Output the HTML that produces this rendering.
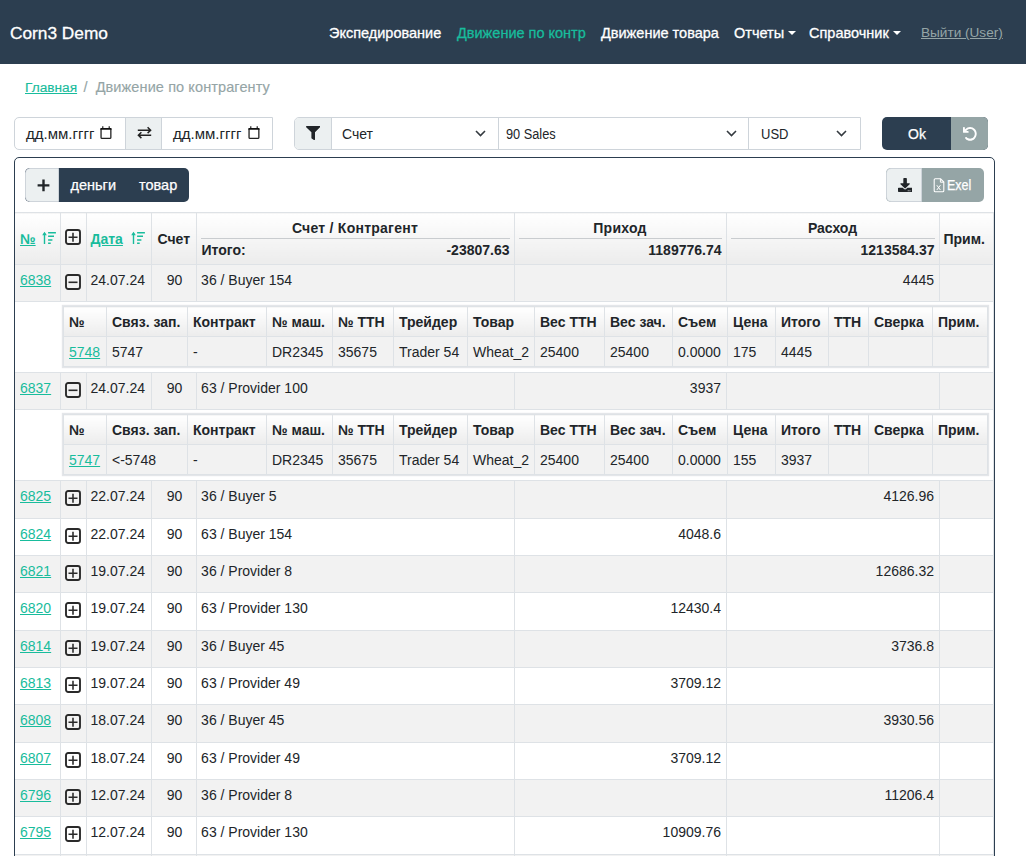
<!DOCTYPE html>
<html><head><meta charset="utf-8">
<style>
*{box-sizing:border-box}
html,body{margin:0;padding:0;background:#fff;width:1026px;height:856px;overflow:hidden}
body{font-family:"Liberation Sans",sans-serif;color:#212529;position:relative}
.abs{position:absolute}
.nav{position:absolute;left:0;top:0;width:1026px;height:64px;background:#2c3e50}
.nav span{position:absolute;top:1.4px;line-height:64px;white-space:nowrap;color:#fff;font-size:14.5px;-webkit-text-stroke:0.3px currentColor}
.caret{display:inline-block;width:0;height:0;border-left:4.5px solid transparent;border-right:4.5px solid transparent;border-top:4.5px solid #fff;vertical-align:3px;margin-left:4px}
.bc{position:absolute;top:78px;font-size:14.5px;white-space:nowrap;line-height:18px}
.grp{position:absolute;border:1px solid #ced4da;border-radius:5px 0 0 5px;background:#fff;overflow:hidden}
.grp > div{position:absolute;top:0;bottom:0}
.grp .sep{width:1px;background:#ced4da}
.grp .add{background:#ecf0f1}
.txt{position:absolute;white-space:nowrap}
.card{position:absolute;left:14px;top:157px;width:981px;height:760px;border:1px solid #2c3e50;border-radius:5px;background:#fff}
.btn{position:absolute;border-radius:5px;overflow:hidden}
table{border-collapse:collapse;table-layout:fixed}
.tw{position:absolute;left:0;top:54px;width:978px}
.mt{width:978px;font-size:14px}
.mt > tbody > tr > td,.mt > tbody > tr > th{border:1px solid #dee2e6;padding:0 4px;white-space:nowrap;vertical-align:top;overflow:hidden}
.mt > tbody > tr > td:first-child,.mt > tbody > tr > th:first-child{border-left:0}
.mt th{background:linear-gradient(#fff,#ececec);height:52px;font-weight:700;position:relative}
.mt tr.r > td{padding-top:5px;line-height:21px}
.mt tr.g > td{background:#f2f2f2}
a{color:#18bc9c;text-decoration:underline}
.ic{display:block;margin-top:4.3px}
.mt td.ci{padding-left:4px}
.mt td.c{text-align:center;padding-left:5px;padding-right:3px}
.mt tr.r > td:first-child{padding-left:5px}
.mt td.nm{padding-left:4.6px}
.mt td.n{text-align:right;padding-right:4.5px}
.mt td.dcell{padding:4px 4px 3px 48px;background:#fff;vertical-align:top}
.dt{font-size:14px;width:925px;box-shadow:0 0 1px 0.6px rgba(205,210,215,0.55)}
.dt td,.dt th{border:1px solid #dee2e6;padding:0 5px;white-space:nowrap;text-align:left;overflow:hidden;vertical-align:middle}
.dt th{height:30px;background:linear-gradient(#fff,#ececec);font-weight:700}
.dt td{height:30px;background:#f2f2f2}
.hc{position:absolute;white-space:nowrap;line-height:16px}
.hl{position:absolute;top:25px;height:1px;background:#c9cccf}
.srt{position:absolute}
.wt{-webkit-text-stroke:0.25px currentColor}
.wt2{-webkit-text-stroke:0.15px currentColor}

</style></head><body>
<div class="nav">
  <span style="left:10px;font-size:17.3px;top:1px">Corn3 Demo</span>
  <span style="left:329px">Экспедирование</span>
  <span style="left:457px;color:#18bc9c">Движение по контр</span>
  <span style="left:601px">Движение товара</span>
  <span style="left:734px">Отчеты<i class="caret"></i></span>
  <span style="left:809px">Справочник<i class="caret"></i></span>
  <span style="left:921px;color:#95a5a6;text-decoration:underline;font-size:13.6px;-webkit-text-stroke:0">Выйти (User)</span>
</div>
<div class="bc wt2" style="left:25px"><a style="font-size:13.7px">Главная</a><span style="color:#95a5a6;padding:0 8px 0 6.5px">/</span><span style="color:#95a5a6;letter-spacing:0.1px">Движение по контрагенту</span></div>

<div class="grp" style="left:14px;top:117px;width:259px;height:33px">
  <div class="add" style="left:110px;width:36px"></div>
  <div class="sep" style="left:110px"></div><div class="sep" style="left:146px"></div>
  <span class="txt" style="left:11px;top:7px;font-size:15px">дд.мм.гггг</span>
  <svg class="abs" style="left:85.3px;top:8px" width="12" height="13" viewBox="0 0 12 13"><path d="M1.05 3V11.4Q1.05 12.35 2 12.35H9.9Q10.85 12.35 10.85 11.4V3" fill="none" stroke="#222" stroke-width="1.3"/><path d="M0.4 2H11.5V3.8H0.4Z" fill="#111"/><path d="M2.8 0.2V2.4M9.2 0.2V2.4" stroke="#111" stroke-width="1.1"/></svg>
  <svg class="abs" style="left:121.8px;top:8px" width="15" height="13" viewBox="0 0 15 13"><path d="M0.8 4.2H13.6M10.6 1.3L13.6 4.2L10.6 7.1" fill="none" stroke="#222" stroke-width="1.5"/><path d="M14.2 9.2H1.4M4.4 6.3L1.4 9.2L4.4 12.1" fill="none" stroke="#222" stroke-width="1.5"/></svg>
  <span class="txt" style="left:158px;top:7px;font-size:15px">дд.мм.гггг</span>
  <svg class="abs" style="left:232.8px;top:8px" width="12" height="13" viewBox="0 0 12 13"><path d="M1.05 3V11.4Q1.05 12.35 2 12.35H9.9Q10.85 12.35 10.85 11.4V3" fill="none" stroke="#222" stroke-width="1.3"/><path d="M0.4 2H11.5V3.8H0.4Z" fill="#111"/><path d="M2.8 0.2V2.4M9.2 0.2V2.4" stroke="#111" stroke-width="1.1"/></svg>
</div>
<div class="grp" style="left:294px;top:117px;width:567px;height:33px">
  <div class="add" style="left:0;width:36px"></div>
  <div class="sep" style="left:36px"></div><div class="sep" style="left:203px"></div><div class="sep" style="left:453px"></div>
  <svg class="abs" style="left:10.7px;top:7.8px" width="14.4" height="14.1" viewBox="0 0 512 512" preserveAspectRatio="none"><path fill="#212529" d="M487.976 0H24.028C2.71 0-8.047 25.866 7.058 40.971L192 225.941V432c0 7.831 3.821 15.17 10.237 19.662l80 55.98C298.02 518.69 320 507.493 320 487.98V225.941l184.947-184.97C520.021 25.896 509.338 0 487.976 0z"/></svg>
  <span class="txt" style="left:47px;top:8px;font-size:14px">Счет</span>
  <svg class="abs chev" style="left:180px;top:12px" width="11" height="7" viewBox="0 0 11 7"><path d="M1 1L5.5 5.5L10 1" fill="none" stroke="#343a40" stroke-width="1.6"/></svg>
  <span class="txt" style="left:211px;top:8px;font-size:14px;transform:scaleX(0.912);transform-origin:0 0">90 Sales</span>
  <svg class="abs chev" style="left:431px;top:12px" width="11" height="7" viewBox="0 0 11 7"><path d="M1 1L5.5 5.5L10 1" fill="none" stroke="#343a40" stroke-width="1.6"/></svg>
  <span class="txt" style="left:466px;top:8px;font-size:14px;transform:scaleX(0.93);transform-origin:0 0">USD</span>
  <svg class="abs chev" style="left:541px;top:12px" width="11" height="7" viewBox="0 0 11 7"><path d="M1 1L5.5 5.5L10 1" fill="none" stroke="#343a40" stroke-width="1.6"/></svg>
</div>
<div class="btn" style="left:882px;top:117px;width:106px;height:33px;background:#2c3e50">
  <div class="abs" style="left:69px;top:0;width:37px;height:33px;background:#95a5a6"></div>
  <span class="txt wt" style="left:26px;top:9px;font-size:14px;color:#fff">Ok</span>
  <svg class="abs" style="left:80.9px;top:10px" width="13.7" height="13.7" viewBox="16 32 464 448" preserveAspectRatio="none"><path fill="#fff" d="M125.7 160H176c17.7 0 32 14.3 32 32s-14.3 32-32 32H48c-17.7 0-32-14.3-32-32V64c0-17.7 14.3-32 32-32s32 14.3 32 32v51.2L97.6 97.6c87.5-87.5 229.3-87.5 316.8 0s87.5 229.3 0 316.8s-229.3 87.5-316.8 0c-12.5-12.5-12.5-32.8 0-45.3s32.8-12.5 45.3 0c62.5 62.5 163.8 62.5 226.3 0s62.5-163.8 0-226.3s-163.8-62.5-226.3 0L125.7 160z"/></svg>
</div>

<div class="card">
  <div class="btn" style="left:10px;top:10px;width:164px;height:34px;background:#2c3e50">
    <div class="abs" style="left:0;top:0;width:34px;height:34px;background:#ecf0f1;border:1px solid #ced4da;border-radius:5px 0 0 5px"></div>
    <svg class="abs" style="left:11.5px;top:11px" width="13" height="13" viewBox="0 0 13 13"><path d="M6.5 0.6V12.2M0.6 6.4H12.4" stroke="#212529" stroke-width="2.4"/></svg>
    <span class="txt wt" style="left:45.5px;top:9px;font-size:14.5px;color:#fff">деньги</span>
    <span class="txt wt" style="left:114px;top:9px;font-size:14.5px;color:#fff">товар</span>
  </div>
  <div class="btn" style="left:871px;top:10px;width:98px;height:34px;background:#95a5a6">
    <div class="abs" style="left:0;top:0;width:36px;height:34px;background:#ecf0f1;border:1px solid #ced4da;border-radius:5px 0 0 5px"></div>
    <svg class="abs" style="left:11.9px;top:10px" width="14.2" height="14" viewBox="0 0 512 512" preserveAspectRatio="none"><path fill="#212529" d="M216 0h80c13.3 0 24 10.7 24 24v168h87.7c17.8 0 26.7 21.5 14.1 34.1L269.7 378.3c-7.5 7.5-19.8 7.5-27.3 0L90.1 226.1c-12.6-12.6-3.7-34.1 14.1-34.1H192V24c0-13.3 10.7-24 24-24zm296 376v112c0 13.3-10.7 24-24 24H24c-13.3 0-24-10.7-24-24V376c0-13.3 10.7-24 24-24h146.7l49 49c20.1 20.1 52.5 20.1 72.6 0l49-49H488c13.3 0 24 10.7 24 24zm-124 88c0-11-9-20-20-20s-20 9-20 20 9 20 20 20 20-9 20-20zm64 0c0-11-9-20-20-20s-20 9-20 20 9 20 20 20 20-9 20-20z"/></svg>
    <svg class="abs" style="left:47px;top:10px" width="12" height="15" viewBox="0 0 12 15"><path d="M1.2 1.8Q1.2 0.8 2.2 0.8H7.6L10.8 4V12.8Q10.8 13.8 9.8 13.8H2.2Q1.2 13.8 1.2 12.8Z" fill="none" stroke="#fff" stroke-width="1.1"/><path d="M7.4 0.9V4.2H10.7" fill="none" stroke="#fff" stroke-width="1"/><path d="M3.8 7.2L7.4 12M7.4 7.2L3.8 12" stroke="#fff" stroke-width="1"/></svg>
    <span class="txt wt" style="left:61.3px;top:9px;font-size:14px;color:#fff;transform:scaleX(0.89);transform-origin:0 0">Exel</span>
  </div>
<div class="tw"><table class="mt">
<colgroup><col style="width:45px"><col style="width:26px"><col style="width:65px"><col style="width:45px"><col style="width:318px"><col style="width:212px"><col style="width:213px"><col style="width:54px"></colgroup>
<tr class="hd"><th><div class="hc" style="left:5px;top:18px"><a>№</a></div><svg class="srt" style="left:27px;top:17.3px" width="15" height="15" viewBox="0 0 15 15"><path d="M2.5 3V14" stroke="#18bc9c" stroke-width="1.4"/><path d="M0.2 5.2L2.5 1.7L4.8 5.2Z" fill="#18bc9c"/><path d="M6.1 2.8H13.9M6.1 6.3H12M6.1 9.9H10.4M6.1 13.2H8.7" stroke="#18bc9c" stroke-width="1.45"/></svg></th>
<th><svg class="ic" style="position:absolute;left:4px;top:16px;margin:0" width="16" height="16" viewBox="0 0 16 16"><rect x="1" y="1" width="14" height="14" rx="2.2" fill="none" stroke="#2a2a2a" stroke-width="1.9"/><path d="M3.5 8.2H12.5M8 3.7V12.8" stroke="#2a2a2a" stroke-width="1.55"/></svg></th>
<th><div class="hc" style="left:4px;top:18px"><a>Дата</a></div><svg class="srt" style="left:44px;top:17.3px" width="15" height="15" viewBox="0 0 15 15"><path d="M2.5 3V14" stroke="#18bc9c" stroke-width="1.4"/><path d="M0.2 5.2L2.5 1.7L4.8 5.2Z" fill="#18bc9c"/><path d="M6.1 2.8H13.9M6.1 6.3H12M6.1 9.9H10.4M6.1 13.2H8.7" stroke="#18bc9c" stroke-width="1.45"/></svg></th>
<th><div class="hc" style="left:6px;top:18px">Счет</div></th>
<th><div class="hc" style="left:0;right:0;top:6.5px;text-align:center;letter-spacing:0.25px">Счет / Контрагент</div><div class="hl" style="left:4px;right:4px"></div><div class="hc" style="left:5px;top:28.5px">Итого:</div><div class="hc" style="right:4px;top:28.5px">-23807.63</div></th>
<th><div class="hc" style="left:0;right:0;top:6.5px;text-align:center;letter-spacing:0.25px">Приход</div><div class="hl" style="left:4px;right:4px"></div><div class="hc" style="right:4px;top:28.5px">1189776.74</div></th>
<th><div class="hc" style="left:0;right:0;top:6.5px;text-align:center">Расход</div><div class="hl" style="left:4px;right:4px"></div><div class="hc" style="right:4px;top:28.5px">1213584.37</div></th>
<th><div class="hc" style="left:4px;top:18px">Прим.</div></th></tr>
<tr class="r g" style="height:37px"><td><a>6838</a></td><td class="ci"><svg class="ic" width="16" height="16" viewBox="0 0 16 16"><rect x="1" y="1" width="14" height="14" rx="2.2" fill="none" stroke="#2a2a2a" stroke-width="1.9"/><path d="M3.5 8.3H12.5" stroke="#2a2a2a" stroke-width="1.6"/></svg></td><td>24.07.24</td><td class="c">90</td><td class="nm">36 / Buyer 154</td><td class="n"></td><td class="n">4445</td><td></td></tr>
<tr class="dr" style="height:71px"><td colspan="8" class="dcell"><table class="dt"><colgroup><col style="width:43px"><col style="width:81px"><col style="width:79px"><col style="width:66px"><col style="width:61px"><col style="width:74px"><col style="width:67px"><col style="width:70px"><col style="width:68px"><col style="width:55px"><col style="width:48px"><col style="width:53px"><col style="width:40px"><col style="width:64px"><col style="width:55px"></colgroup><tr><th>№</th><th>Связ. зап.</th><th>Контракт</th><th>№ маш.</th><th>№ ТТН</th><th>Трейдер</th><th>Товар</th><th>Вес ТТН</th><th>Вес зач.</th><th>Съем</th><th>Цена</th><th>Итого</th><th>ТТН</th><th>Сверка</th><th>Прим.</th></tr><tr><td><a>5748</a></td><td>5747</td><td>-</td><td>DR2345</td><td>35675</td><td>Trader 54</td><td>Wheat_2</td><td>25400</td><td>25400</td><td>0.0000</td><td>175</td><td>4445</td><td></td><td></td><td></td></tr></table></td></tr>
<tr class="r g" style="height:37px"><td><a>6837</a></td><td class="ci"><svg class="ic" width="16" height="16" viewBox="0 0 16 16"><rect x="1" y="1" width="14" height="14" rx="2.2" fill="none" stroke="#2a2a2a" stroke-width="1.9"/><path d="M3.5 8.3H12.5" stroke="#2a2a2a" stroke-width="1.6"/></svg></td><td>24.07.24</td><td class="c">90</td><td class="nm">63 / Provider 100</td><td class="n">3937</td><td class="n"></td><td></td></tr>
<tr class="dr" style="height:71px"><td colspan="8" class="dcell"><table class="dt"><colgroup><col style="width:43px"><col style="width:81px"><col style="width:79px"><col style="width:66px"><col style="width:61px"><col style="width:74px"><col style="width:67px"><col style="width:70px"><col style="width:68px"><col style="width:55px"><col style="width:48px"><col style="width:53px"><col style="width:40px"><col style="width:64px"><col style="width:55px"></colgroup><tr><th>№</th><th>Связ. зап.</th><th>Контракт</th><th>№ маш.</th><th>№ ТТН</th><th>Трейдер</th><th>Товар</th><th>Вес ТТН</th><th>Вес зач.</th><th>Съем</th><th>Цена</th><th>Итого</th><th>ТТН</th><th>Сверка</th><th>Прим.</th></tr><tr><td><a>5747</a></td><td>&lt;-5748</td><td>-</td><td>DR2345</td><td>35675</td><td>Trader 54</td><td>Wheat_2</td><td>25400</td><td>25400</td><td>0.0000</td><td>155</td><td>3937</td><td></td><td></td><td></td></tr></table></td></tr>
<tr class="r g" style="height:38px"><td><a>6825</a></td><td class="ci"><svg class="ic" width="16" height="16" viewBox="0 0 16 16"><rect x="1" y="1" width="14" height="14" rx="2.2" fill="none" stroke="#2a2a2a" stroke-width="1.9"/><path d="M3.5 8.2H12.5M8 3.7V12.8" stroke="#2a2a2a" stroke-width="1.55"/></svg></td><td>22.07.24</td><td class="c">90</td><td class="nm">36 / Buyer 5</td><td class="n"></td><td class="n">4126.96</td><td></td></tr>
<tr class="r" style="height:37px"><td><a>6824</a></td><td class="ci"><svg class="ic" width="16" height="16" viewBox="0 0 16 16"><rect x="1" y="1" width="14" height="14" rx="2.2" fill="none" stroke="#2a2a2a" stroke-width="1.9"/><path d="M3.5 8.2H12.5M8 3.7V12.8" stroke="#2a2a2a" stroke-width="1.55"/></svg></td><td>22.07.24</td><td class="c">90</td><td class="nm">63 / Buyer 154</td><td class="n">4048.6</td><td class="n"></td><td></td></tr>
<tr class="r g" style="height:37px"><td><a>6821</a></td><td class="ci"><svg class="ic" width="16" height="16" viewBox="0 0 16 16"><rect x="1" y="1" width="14" height="14" rx="2.2" fill="none" stroke="#2a2a2a" stroke-width="1.9"/><path d="M3.5 8.2H12.5M8 3.7V12.8" stroke="#2a2a2a" stroke-width="1.55"/></svg></td><td>19.07.24</td><td class="c">90</td><td class="nm">36 / Provider 8</td><td class="n"></td><td class="n">12686.32</td><td></td></tr>
<tr class="r" style="height:38px"><td><a>6820</a></td><td class="ci"><svg class="ic" width="16" height="16" viewBox="0 0 16 16"><rect x="1" y="1" width="14" height="14" rx="2.2" fill="none" stroke="#2a2a2a" stroke-width="1.9"/><path d="M3.5 8.2H12.5M8 3.7V12.8" stroke="#2a2a2a" stroke-width="1.55"/></svg></td><td>19.07.24</td><td class="c">90</td><td class="nm">63 / Provider 130</td><td class="n">12430.4</td><td class="n"></td><td></td></tr>
<tr class="r g" style="height:37px"><td><a>6814</a></td><td class="ci"><svg class="ic" width="16" height="16" viewBox="0 0 16 16"><rect x="1" y="1" width="14" height="14" rx="2.2" fill="none" stroke="#2a2a2a" stroke-width="1.9"/><path d="M3.5 8.2H12.5M8 3.7V12.8" stroke="#2a2a2a" stroke-width="1.55"/></svg></td><td>19.07.24</td><td class="c">90</td><td class="nm">36 / Buyer 45</td><td class="n"></td><td class="n">3736.8</td><td></td></tr>
<tr class="r" style="height:37px"><td><a>6813</a></td><td class="ci"><svg class="ic" width="16" height="16" viewBox="0 0 16 16"><rect x="1" y="1" width="14" height="14" rx="2.2" fill="none" stroke="#2a2a2a" stroke-width="1.9"/><path d="M3.5 8.2H12.5M8 3.7V12.8" stroke="#2a2a2a" stroke-width="1.55"/></svg></td><td>19.07.24</td><td class="c">90</td><td class="nm">63 / Provider 49</td><td class="n">3709.12</td><td class="n"></td><td></td></tr>
<tr class="r g" style="height:38px"><td><a>6808</a></td><td class="ci"><svg class="ic" width="16" height="16" viewBox="0 0 16 16"><rect x="1" y="1" width="14" height="14" rx="2.2" fill="none" stroke="#2a2a2a" stroke-width="1.9"/><path d="M3.5 8.2H12.5M8 3.7V12.8" stroke="#2a2a2a" stroke-width="1.55"/></svg></td><td>18.07.24</td><td class="c">90</td><td class="nm">36 / Buyer 45</td><td class="n"></td><td class="n">3930.56</td><td></td></tr>
<tr class="r" style="height:37px"><td><a>6807</a></td><td class="ci"><svg class="ic" width="16" height="16" viewBox="0 0 16 16"><rect x="1" y="1" width="14" height="14" rx="2.2" fill="none" stroke="#2a2a2a" stroke-width="1.9"/><path d="M3.5 8.2H12.5M8 3.7V12.8" stroke="#2a2a2a" stroke-width="1.55"/></svg></td><td>18.07.24</td><td class="c">90</td><td class="nm">63 / Provider 49</td><td class="n">3709.12</td><td class="n"></td><td></td></tr>
<tr class="r g" style="height:37px"><td><a>6796</a></td><td class="ci"><svg class="ic" width="16" height="16" viewBox="0 0 16 16"><rect x="1" y="1" width="14" height="14" rx="2.2" fill="none" stroke="#2a2a2a" stroke-width="1.9"/><path d="M3.5 8.2H12.5M8 3.7V12.8" stroke="#2a2a2a" stroke-width="1.55"/></svg></td><td>12.07.24</td><td class="c">90</td><td class="nm">36 / Provider 8</td><td class="n"></td><td class="n">11206.4</td><td></td></tr>
<tr class="r" style="height:38px"><td><a>6795</a></td><td class="ci"><svg class="ic" width="16" height="16" viewBox="0 0 16 16"><rect x="1" y="1" width="14" height="14" rx="2.2" fill="none" stroke="#2a2a2a" stroke-width="1.9"/><path d="M3.5 8.2H12.5M8 3.7V12.8" stroke="#2a2a2a" stroke-width="1.55"/></svg></td><td>12.07.24</td><td class="c">90</td><td class="nm">63 / Provider 130</td><td class="n">10909.76</td><td class="n"></td><td></td></tr>
<tr class="r g" style="height:37px"><td><a>6794</a></td><td class="ci"><svg class="ic" width="16" height="16" viewBox="0 0 16 16"><rect x="1" y="1" width="14" height="14" rx="2.2" fill="none" stroke="#2a2a2a" stroke-width="1.9"/><path d="M3.5 8.2H12.5M8 3.7V12.8" stroke="#2a2a2a" stroke-width="1.55"/></svg></td><td>12.07.24</td><td class="c">90</td><td class="nm">36 / Buyer 5</td><td class="n"></td><td class="n">1000</td><td></td></tr>
</table></div>
</div>
</body></html>
